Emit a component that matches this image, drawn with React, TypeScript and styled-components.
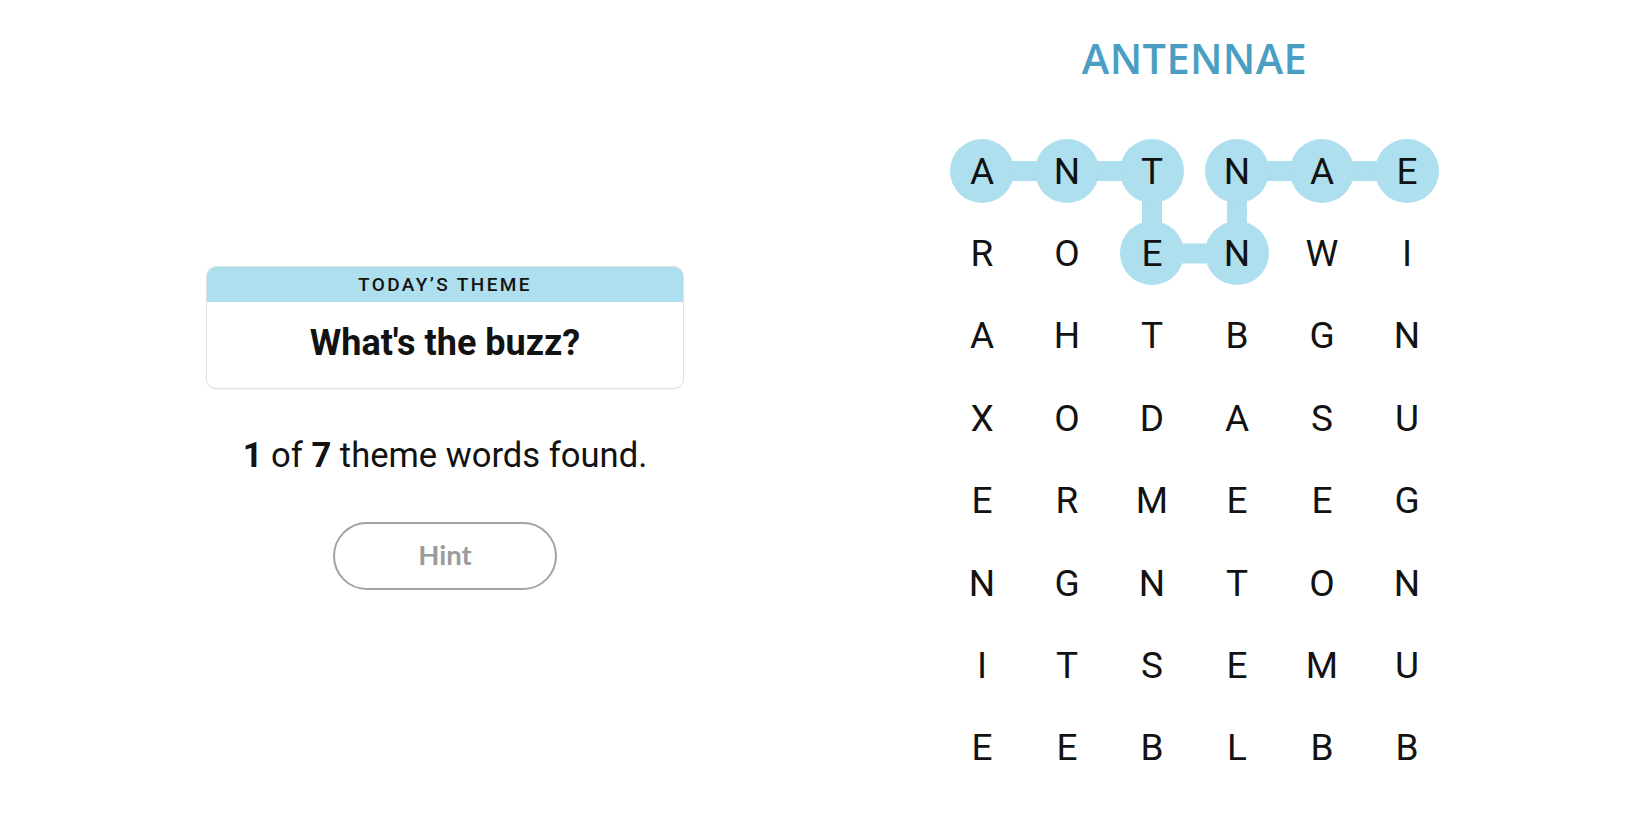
import React from "react";
import styled, { createGlobalStyle } from "styled-components";

const GlobalStyle = createGlobalStyle`
  html, body { margin: 0; padding: 0; background: #ffffff; }
  body { font-family: Roboto, "Liberation Sans", Arial, sans-serif; color: #121212; }
`;

const Page = styled.main`
  display: flex;
  justify-content: center;
  align-items: flex-start;
  gap: 266px;
  padding-right: 5px;
  width: 1650px;
  height: 825px;
  box-sizing: border-box;
`;

const LeftColumn = styled.section`
  width: 478px;
  padding-top: 266px;
  display: flex;
  flex-direction: column;
  align-items: center;
`;

const ThemeCard = styled.div`
  width: 100%;
  box-sizing: border-box;
  border: 1px solid #e2e2e2;
  border-radius: 10px;
  overflow: hidden;
  background: #fff;
  box-shadow: 0 1px 2px rgba(0, 0, 0, 0.04);
`;

const ThemeHeader = styled.div`
  height: 35px;
  background: #aedfee;
  display: flex;
  align-items: center;
  justify-content: center;
  font-family: Roboto, "Liberation Sans", sans-serif;
  font-size: 19px;
  font-weight: 500;
  letter-spacing: 2.4px;
  color: #121212;
  text-transform: uppercase;
`;

const ThemeBody = styled.div`
  height: 86px;
  padding-bottom: 4px;
  box-sizing: border-box;
  display: flex;
  align-items: center;
  justify-content: center;
  font-family: Roboto, "Liberation Sans", sans-serif;
  font-size: 36px;
  font-weight: 700;
  color: #121212;
`;

const Counter = styled.p`
  margin: 46px 0 0;
  line-height: 40px;
  font-family: Roboto, "Liberation Sans", sans-serif;
  font-size: 34.6px;
  font-weight: 400;
  color: #121212;
  white-space: nowrap;

  b {
    font-weight: 700;
  }
`;

const HintButton = styled.button`
  margin-top: 47px;
  width: 224px;
  height: 68px;
  padding: 0 0 3px;
  border: 2px solid #a3a3a3;
  border-radius: 34px;
  background: #fff;
  font-family: Lato, "Liberation Sans", sans-serif;
  font-size: 27.5px;
  font-weight: 700;
  color: #9b9b9b;
  cursor: default;
`;

const RightColumn = styled.section`
  width: 489px;
  padding-top: 33px;
  display: flex;
  flex-direction: column;
  align-items: center;
`;

const WordTitle = styled.h1`
  margin: 0 0 56px;
  line-height: 50px;
  font-family: "Open Sans", "Noto Sans", sans-serif;
  font-size: 41.5px;
  font-weight: 600;
  color: #4a9ec3;
  letter-spacing: 0.4px;
`;

const BoardWrap = styled.div`
  position: relative;
`;

const Board = styled.div`
  position: relative;
  z-index: 1;
  display: grid;
  grid-template-columns: repeat(6, 64px);
  grid-auto-rows: 64px;
  column-gap: 21px;
  row-gap: 18.43px;
`;

const Connectors = styled.svg`
  position: absolute;
  left: 0;
  top: 0;
  z-index: 0;
  overflow: visible;
`;

const Cell = styled.div<{ $found: boolean }>`
  width: 64px;
  height: 64px;
  border-radius: 50%;
  background: ${(p) => (p.$found ? "#aedfee" : "transparent")};
  display: flex;
  align-items: center;
  justify-content: center;
  font-family: Roboto, "Liberation Sans", sans-serif;
  font-size: 37px;
  font-weight: 400;
  color: #121212;
`;

const letters = [
  "ANTNAE",
  "ROENWI",
  "AHTBGN",
  "XODASU",
  "ERMEEG",
  "NGNTON",
  "ITSEMU",
  "EEBLBB",
];

const path: [number, number][] = [
  [0, 0],
  [0, 1],
  [0, 2],
  [1, 2],
  [1, 3],
  [0, 3],
  [0, 4],
  [0, 5],
];

const COL = 85;
const ROW = 82.43;
const cx = (c: number) => 32 + c * COL;
const cy = (r: number) => 32 + r * ROW;

export default function App() {
  const found = new Set(path.map(([r, c]) => `${r}-${c}`));
  const width = 6 * 64 + 5 * 21;
  const height = 8 * 64 + 7 * 18.43;
  return (
    <>
      <GlobalStyle />
      <Page>
        <LeftColumn>
          <ThemeCard>
            <ThemeHeader>Today’s Theme</ThemeHeader>
            <ThemeBody>What's the buzz?</ThemeBody>
          </ThemeCard>
          <Counter>
            <b>1</b> of <b>7</b> theme words found.
          </Counter>
          <HintButton type="button">Hint</HintButton>
        </LeftColumn>
        <RightColumn>
          <WordTitle>ANTENNAE</WordTitle>
          <BoardWrap>
            <Connectors width={width} height={height} viewBox={`0 0 ${width} ${height}`}>
              {path.slice(1).map(([r, c], i) => {
                const [pr, pc] = path[i];
                return (
                  <line
                    key={i}
                    x1={cx(pc)}
                    y1={cy(pr)}
                    x2={cx(c)}
                    y2={cy(r)}
                    stroke="#aedfee"
                    strokeWidth={20}
                  />
                );
              })}
            </Connectors>
            <Board>
              {letters.map((row, r) =>
                row.split("").map((ch, c) => (
                  <Cell key={`${r}-${c}`} $found={found.has(`${r}-${c}`)}>
                    {ch}
                  </Cell>
                ))
              )}
            </Board>
          </BoardWrap>
        </RightColumn>
      </Page>
    </>
  );
}
